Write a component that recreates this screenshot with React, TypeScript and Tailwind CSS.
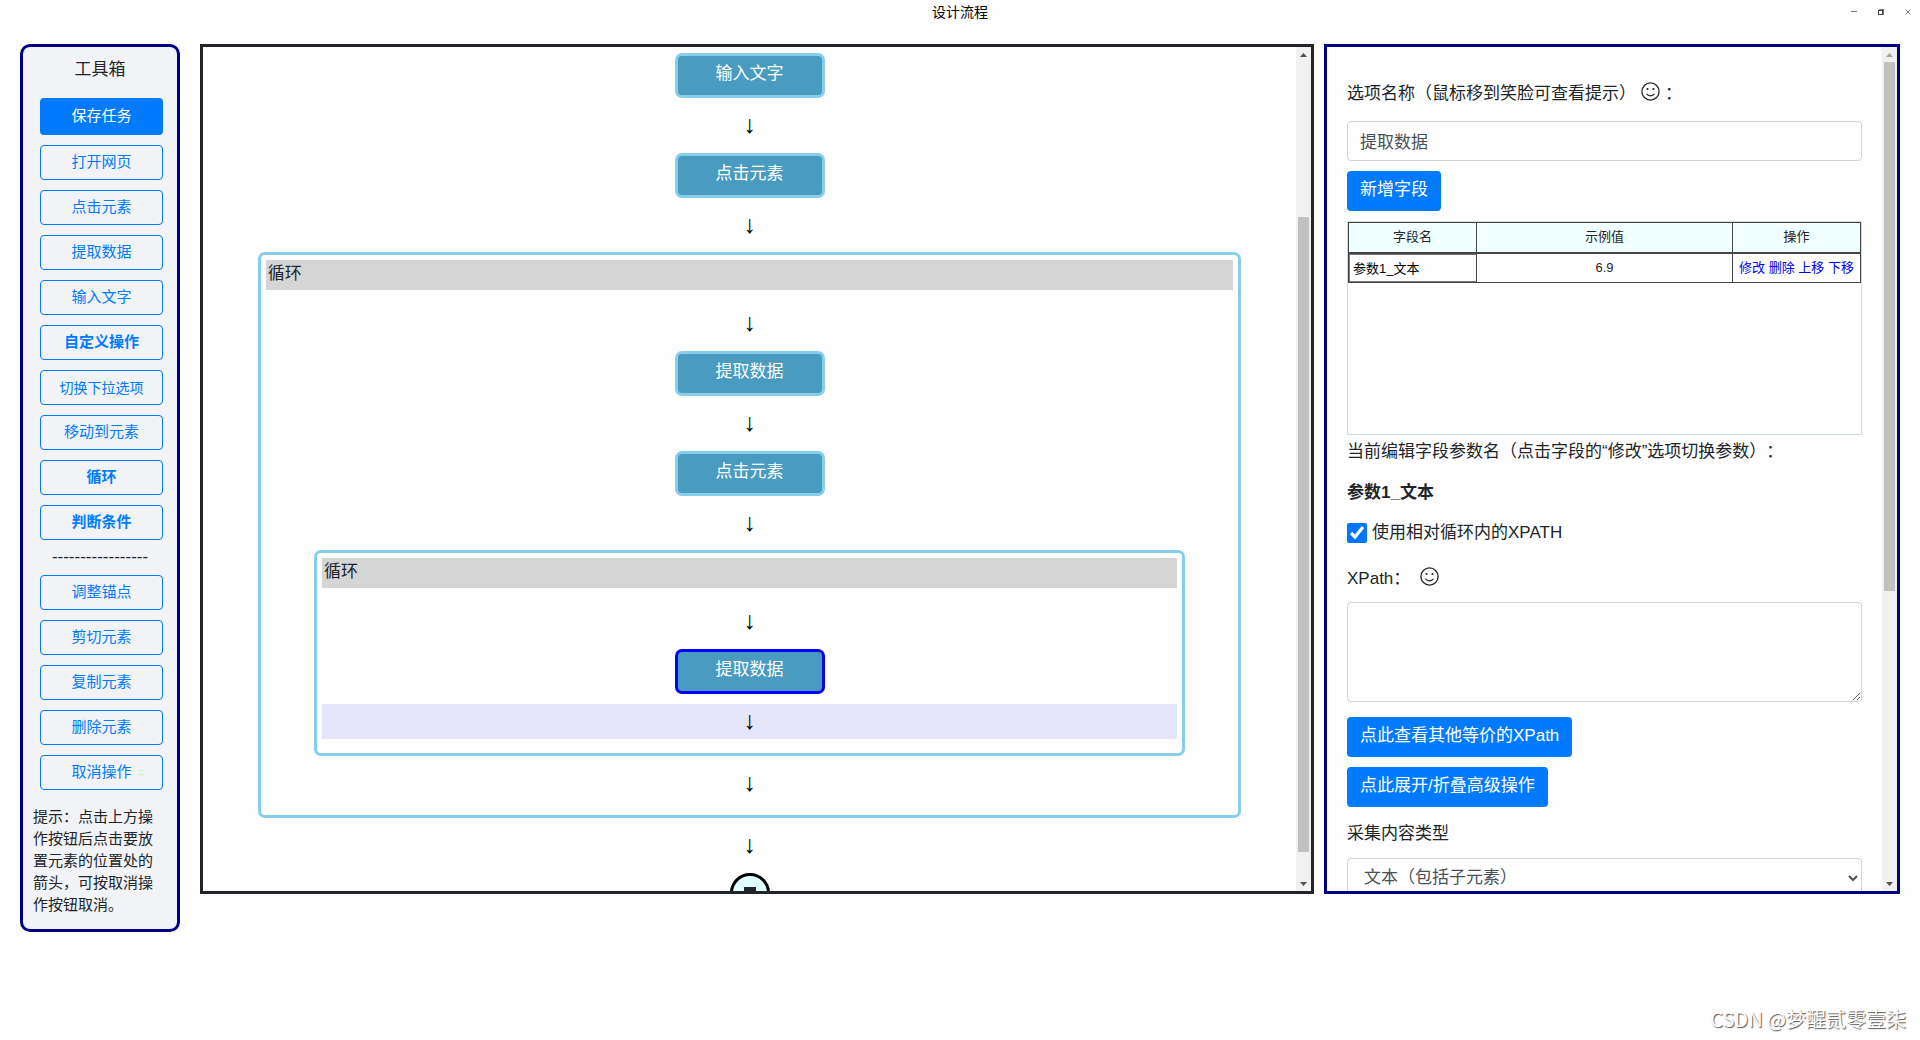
import { useState } from 'react'
import type { ReactNode } from 'react'
import clsx from 'clsx'

interface Tool {
  label: string
  bold?: boolean
  small?: boolean
}

interface FlowItem {
  id: number
  type: 'step' | 'loop'
  label: string
  children?: FlowItem[]
}

const BUILD_TOOLS: Tool[] = [
  { label: '打开网页' },
  { label: '点击元素' },
  { label: '提取数据' },
  { label: '输入文字' },
  { label: '自定义操作', bold: true },
  { label: '切换下拉选项', small: true },
  { label: '移动到元素' },
  { label: '循环', bold: true },
  { label: '判断条件', bold: true }
]

const EDIT_TOOLS: Tool[] = [
  { label: '调整锚点' },
  { label: '剪切元素' },
  { label: '复制元素' },
  { label: '删除元素' },
  { label: '取消操作' }
]

const FLOW: FlowItem[] = [
  { id: 1, type: 'step', label: '输入文字' },
  { id: 2, type: 'step', label: '点击元素' },
  {
    id: 3,
    type: 'loop',
    label: '循环',
    children: [
      { id: 4, type: 'step', label: '提取数据' },
      { id: 5, type: 'step', label: '点击元素' },
      {
        id: 6,
        type: 'loop',
        label: '循环',
        children: [{ id: 7, type: 'step', label: '提取数据' }]
      }
    ]
  }
]

const FIELD_ACTIONS = ['修改', '删除', '上移', '下移']

function TitleBar() {
  return (
    <header className="grid h-6 grid-cols-[1fr_auto_1fr] items-center text-sm text-black">
      <h1 className="col-start-2">设计流程</h1>
      <div className="flex justify-end gap-[15px] pr-[6px] text-[#777]">
        <button aria-label="最小化" className="flex h-3 w-3 items-center justify-center">
          <svg width="6" height="6" viewBox="0 0 6 6" shapeRendering="crispEdges">
            <path d="M0 2.5h6" stroke="currentColor" />
          </svg>
        </button>
        <button aria-label="还原" className="flex h-3 w-3 items-center justify-center">
          <svg width="6" height="6" viewBox="0 0 6 6" shapeRendering="crispEdges" fill="none">
            <path d="M0.5 1.5h4v4h-4z" stroke="#444" />
            <path d="M1 0.5h4.5v5" stroke="#777" />
          </svg>
        </button>
        <button aria-label="关闭" className="flex h-3 w-3 items-center justify-center">
          <svg width="6" height="6" viewBox="0 0 6 6">
            <path d="M0.5 0.5l5 5M5.5 0.5l-5 5" stroke="currentColor" />
          </svg>
        </button>
      </div>
    </header>
  )
}

function ToolButton({ label, bold, small }: Tool) {
  return (
    <button
      className={clsx(
        'h-[35px] rounded-[4px] border border-[#007bff] text-[#007bff]',
        small ? 'text-sm' : 'text-[15px]',
        bold && 'font-bold'
      )}
    >
      {label}
    </button>
  )
}

function Toolbox() {
  return (
    <aside className="w-40 shrink-0 rounded-[10px] border-[3px] border-[#000080] bg-[#f1f3f6] pb-[13px]">
      <h2 className="pt-[10px] text-center text-[17px] leading-[26px]">工具箱</h2>
      <div className="mt-[15px] flex flex-col gap-2.5 pr-[14px] pl-[17px]">
        <button className="h-[37px] rounded-[4px] bg-[#007bff] pb-px text-[15px] text-white">
          保存任务
        </button>
        {BUILD_TOOLS.map((tool) => (
          <ToolButton key={tool.label} {...tool} />
        ))}
      </div>
      <div className="h-[35px] pt-1 text-center text-[17px] leading-[26px]">-----------------</div>
      <div className="flex flex-col gap-2.5 pr-[14px] pl-[17px]">
        {EDIT_TOOLS.map((tool) => (
          <ToolButton key={tool.label} {...tool} />
        ))}
      </div>
      <p className="mt-4 px-[10px] text-[15px] leading-[22px]">
        提示：点击上方操作按钮后点击要放置元素的位置处的箭头，可按取消操作按钮取消。
      </p>
    </aside>
  )
}

interface ScrollbarProps {
  start: number
  size: number
}

function Scrollbar({ start, size }: ScrollbarProps) {
  return (
    <div aria-hidden="true" className="flex w-[15px] shrink-0 flex-col bg-[#f1f1f1]">
      <div className="flex h-[15px] items-center justify-center">
        <svg width="7" height="4" viewBox="0 0 7 4" fill={start > 0 ? '#505050' : '#a3a3a3'}>
          <path d="M3.5 0L7 4H0z" />
        </svg>
      </div>
      <div className="flex flex-1 flex-col items-center">
        <div className="shrink-0" style={{ height: `${start}%` }} />
        <div className="w-[11px] bg-[#c1c1c1]" style={{ height: `${size}%` }} />
      </div>
      <div className="flex h-[15px] items-center justify-center">
        <svg width="7" height="4" viewBox="0 0 7 4" fill="#505050">
          <path d="M0 0h7L3.5 4z" />
        </svg>
      </div>
    </div>
  )
}

function Arrow({ active }: { active?: boolean }) {
  return (
    <div
      className={clsx(
        'flex h-[35px] w-full items-center justify-center pb-[3px] text-[25px] leading-none text-black',
        active && 'bg-[#e6e6fa]'
      )}
    >
      ↓
    </div>
  )
}

interface FlowListProps {
  items: FlowItem[]
  selectedId: number
  onSelect: (id: number) => void
}

function FlowList({ items, selectedId, onSelect }: FlowListProps) {
  return items.map((item) => (
    <div key={item.id} className="flex w-full flex-col items-center gap-2.5">
      {item.type === 'step' ? (
        <button
          onClick={() => onSelect(item.id)}
          className={clsx(
            'h-[45px] w-[150px] rounded-[7px] border-[3px] bg-[#4a9bc0] pb-1 text-[17px] text-white',
            item.id === selectedId ? 'border-[#0000ff]' : 'border-[#87ceeb]'
          )}
        >
          {item.label}
        </button>
      ) : (
        <section className="-mt-px w-[90%] rounded-[7px] border-[3px] border-[#87ceeb] px-[5px] pt-[5px] pb-[14px]">
          <h3 className="mb-4 h-[30px] bg-[#d5d5d5] px-0.5 text-[17px] leading-[28px]">
            {item.label}
          </h3>
          <div className="flex flex-col items-center gap-2.5">
            <Arrow />
            <FlowList items={item.children ?? []} selectedId={selectedId} onSelect={onSelect} />
          </div>
        </section>
      )}
      <Arrow active={item.id === selectedId} />
    </div>
  ))
}

function FlowPanel() {
  const [selectedId, setSelectedId] = useState(7)

  return (
    <main className="flex h-[calc(100vh-190px)] min-w-0 flex-1 border-[3px] border-[#212529]">
      <div className="flex flex-1 flex-col items-center gap-2.5 overflow-hidden pt-1.5">
        <FlowList items={FLOW} selectedId={selectedId} onSelect={setSelectedId} />
        <div className="flex h-10 w-10 shrink-0 items-center justify-center rounded-full border-[3px] border-black bg-[#e0ffff]">
          <span className="h-3 w-3 bg-[#212529]" />
        </div>
      </div>
      <Scrollbar start={19} size={78} />
    </main>
  )
}

function Smile({ hint }: { hint: string }) {
  return (
    <span title={hint} className="self-start pt-px">
      <svg width="19" height="19" viewBox="0 0 19 19" fill="none">
        <circle cx="9.5" cy="9.5" r="8.6" stroke="currentColor" strokeWidth="1.3" />
        <circle cx="6.5" cy="7" r="1.1" fill="currentColor" />
        <circle cx="12.5" cy="7" r="1.1" fill="currentColor" />
        <path d="M5.5 11.8c1.8 2.8 6.2 2.8 8 0" stroke="currentColor" strokeWidth="1.2" />
      </svg>
    </span>
  )
}

function PrimaryButton({ children }: { children: ReactNode }) {
  return (
    <button className="h-10 rounded-[4px] bg-[#007bff] px-[13px] pb-0.5 text-white">
      {children}
    </button>
  )
}

function FieldTable() {
  return (
    <div className="mt-2.5 h-[214px] shrink-0 border border-[#c8dcdc]">
      <table className="w-full table-fixed border-collapse text-center text-[13px] leading-5">
        <thead>
          <tr className="h-[30px] bg-[#f0ffff]">
            <th className="w-1/4 border border-b-2 border-[#444] font-normal">字段名</th>
            <th className="w-1/2 border border-b-2 border-[#444] font-normal">示例值</th>
            <th className="w-1/4 border border-b-2 border-[#444] font-normal">操作</th>
          </tr>
        </thead>
        <tbody>
          <tr className="h-[30px]">
            <td className="border border-[#444] p-0">
              <input
                aria-label="字段名"
                defaultValue="参数1_文本"
                className="block h-[28px] w-full border border-r-0 border-[#767676] px-[3px] text-black"
              />
            </td>
            <td className="border border-[#444] p-0">6.9</td>
            <td className="border border-[#444] p-0 whitespace-nowrap text-[#0000ff]">
              {FIELD_ACTIONS.map((action, i) => (
                <span key={action}>
                  {i > 0 && ' '}
                  <a href="#">{action}</a>
                </span>
              ))}
            </td>
          </tr>
        </tbody>
      </table>
    </div>
  )
}

function OptionsPanel() {
  const [relative, setRelative] = useState(true)

  return (
    <section className="flex h-[calc(100vh-190px)] w-[30vw] shrink-0 border-[3px] border-[#000080] text-[17px] leading-[26px]">
      <div className="flex min-w-0 flex-1 flex-col items-stretch overflow-hidden px-5 pt-[34px]">
        <div className="flex h-[26px] shrink-0 items-center gap-[5px]">
          <label htmlFor="option-name">选项名称（鼠标移到笑脸可查看提示）</label>
          <Smile hint="选项名称" />：
        </div>
        <input
          id="option-name"
          defaultValue="提取数据"
          className="mt-[14px] h-10 shrink-0 rounded-[4px] border border-[#ced4da] px-3 pb-px text-[#495057]"
        />
        <div className="mt-2.5">
          <PrimaryButton>新增字段</PrimaryButton>
        </div>
        <FieldTable />
        <p className="mt-1">当前编辑字段参数名（点击字段的“修改”选项切换参数）：</p>
        <p className="mt-[15px] font-bold">参数1_文本</p>
        <label className="mt-[14px] flex items-center gap-[5px]">
          <input
            type="checkbox"
            checked={relative}
            onChange={(e) => setRelative(e.target.checked)}
            className="h-5 w-5 accent-[#0075ff]"
          />
          使用相对循环内的XPATH
        </label>
        <div className="mt-5 flex h-[26px] shrink-0 items-center gap-2.5">
          <label htmlFor="xpath">XPath：</label>
          <Smile hint="XPath" />
        </div>
        <textarea
          id="xpath"
          className="mt-2.5 h-[100px] shrink-0 rounded-[4px] border border-[#ced4da] px-3 py-1.5"
        />
        <div className="mt-[15px] flex flex-col items-start gap-2.5">
          <PrimaryButton>点此查看其他等价的XPath</PrimaryButton>
          <PrimaryButton>点此展开/折叠高级操作</PrimaryButton>
        </div>
        <label htmlFor="content-type" className="mt-[14px]">
          采集内容类型
        </label>
        <select
          id="content-type"
          className="mt-[11px] h-10 shrink-0 rounded-[4px] border border-[#ced4da] bg-white px-3 pb-0.5 text-[#495057]"
        >
          <option>文本（包括子元素）</option>
        </select>
      </div>
      <Scrollbar start={0} size={65} />
    </section>
  )
}

export default function App() {
  return (
    <div className="flex min-h-screen flex-col bg-[#fefefe] font-['Liberation_Sans','Noto_Sans_CJK_SC',sans-serif] text-[#212529] [text-spacing-trim:space-all]">
      <TitleBar />
      <div className="mt-5 flex items-start px-5">
        <Toolbox />
        <div className="ml-5 flex min-w-0 flex-1 gap-2.5">
          <FlowPanel />
          <OptionsPanel />
        </div>
      </div>
      <footer className="mt-auto px-[14px] pb-1.5 text-right font-['Noto_Sans_CJK_SC',sans-serif] text-[20px] leading-[30px] text-white [text-shadow:1px_1px_1px_#555]">
        CSDN @梦醒贰零壹柒
      </footer>
    </div>
  )
}
